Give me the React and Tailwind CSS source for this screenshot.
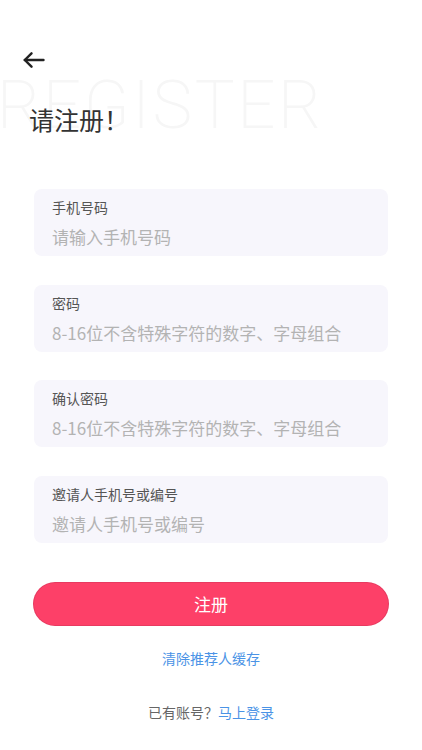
const fields = [
  { label: "手机号码", placeholder: "请输入手机号码" },
  { label: "密码", placeholder: "8-16位不含特殊字符的数字、字母组合" },
  { label: "确认密码", placeholder: "8-16位不含特殊字符的数字、字母组合" },
  { label: "邀请人手机号或编号", placeholder: "邀请人手机号或编号" },
];

function BackArrow() {
  return (
    <svg width="22" height="16" viewBox="0 0 22 16" fill="none" stroke="#222" strokeWidth="2.4" strokeLinecap="round" strokeLinejoin="round">
      <path d="M20.5 8H1.8" />
      <path d="M8.5 1.3 1.8 8l6.7 6.7" />
    </svg>
  );
}

export default function App() {
  return (
    <main
      className="relative w-[422px] h-[750px] bg-white overflow-hidden"
      style={{ fontFamily: '"Noto Sans CJK SC", "Noto Sans", sans-serif' }}
    >
      {/* faint watermark behind the title */}
      <div className="absolute left-[-3px] top-[67px] text-[67px] leading-[76px] font-extralight tracking-[2.6px] text-[#f6f6f6] font-[Roboto,sans-serif] select-none">
        REGISTER
      </div>

      <div className="relative px-[34px]">
        <div className="pt-[52px] -ml-[11px]">
          <BackArrow />
        </div>
        <h1 className="mt-[36px] -ml-[5px] text-[25px] leading-[30px] font-normal text-[#333]">
          请注册！
        </h1>

        <div className="mt-[55px] flex flex-col gap-[28.6px]">
          {fields.map((f) => (
            <div key={f.label} className="h-[67px] rounded-[8px] bg-[#f7f6fc] px-[18px] pt-[8px]">
              <div className="text-[14px] leading-[20px] text-[#555]">{f.label}</div>
              <div className="mt-[8px] text-[17px] leading-[24px] text-[#b3b3b3]">{f.placeholder}</div>
            </div>
          ))}
        </div>

        <button className="mt-[40px] w-full h-[42px] rounded-full bg-[#fd4068] text-white text-[17px] shadow-[0_0_0_1px_#e83a60]">
          注册
        </button>

        <div className="mt-[23px] text-center text-[14px] leading-[20px] text-[#4a93e6]">
          清除推荐人缓存
        </div>

        <div className="mt-[34px] text-center text-[14px] leading-[20px] text-[#666]">
          已有账号？<span className="text-[#4a93e6]">马上登录</span>
        </div>
      </div>
    </main>
  );
}
